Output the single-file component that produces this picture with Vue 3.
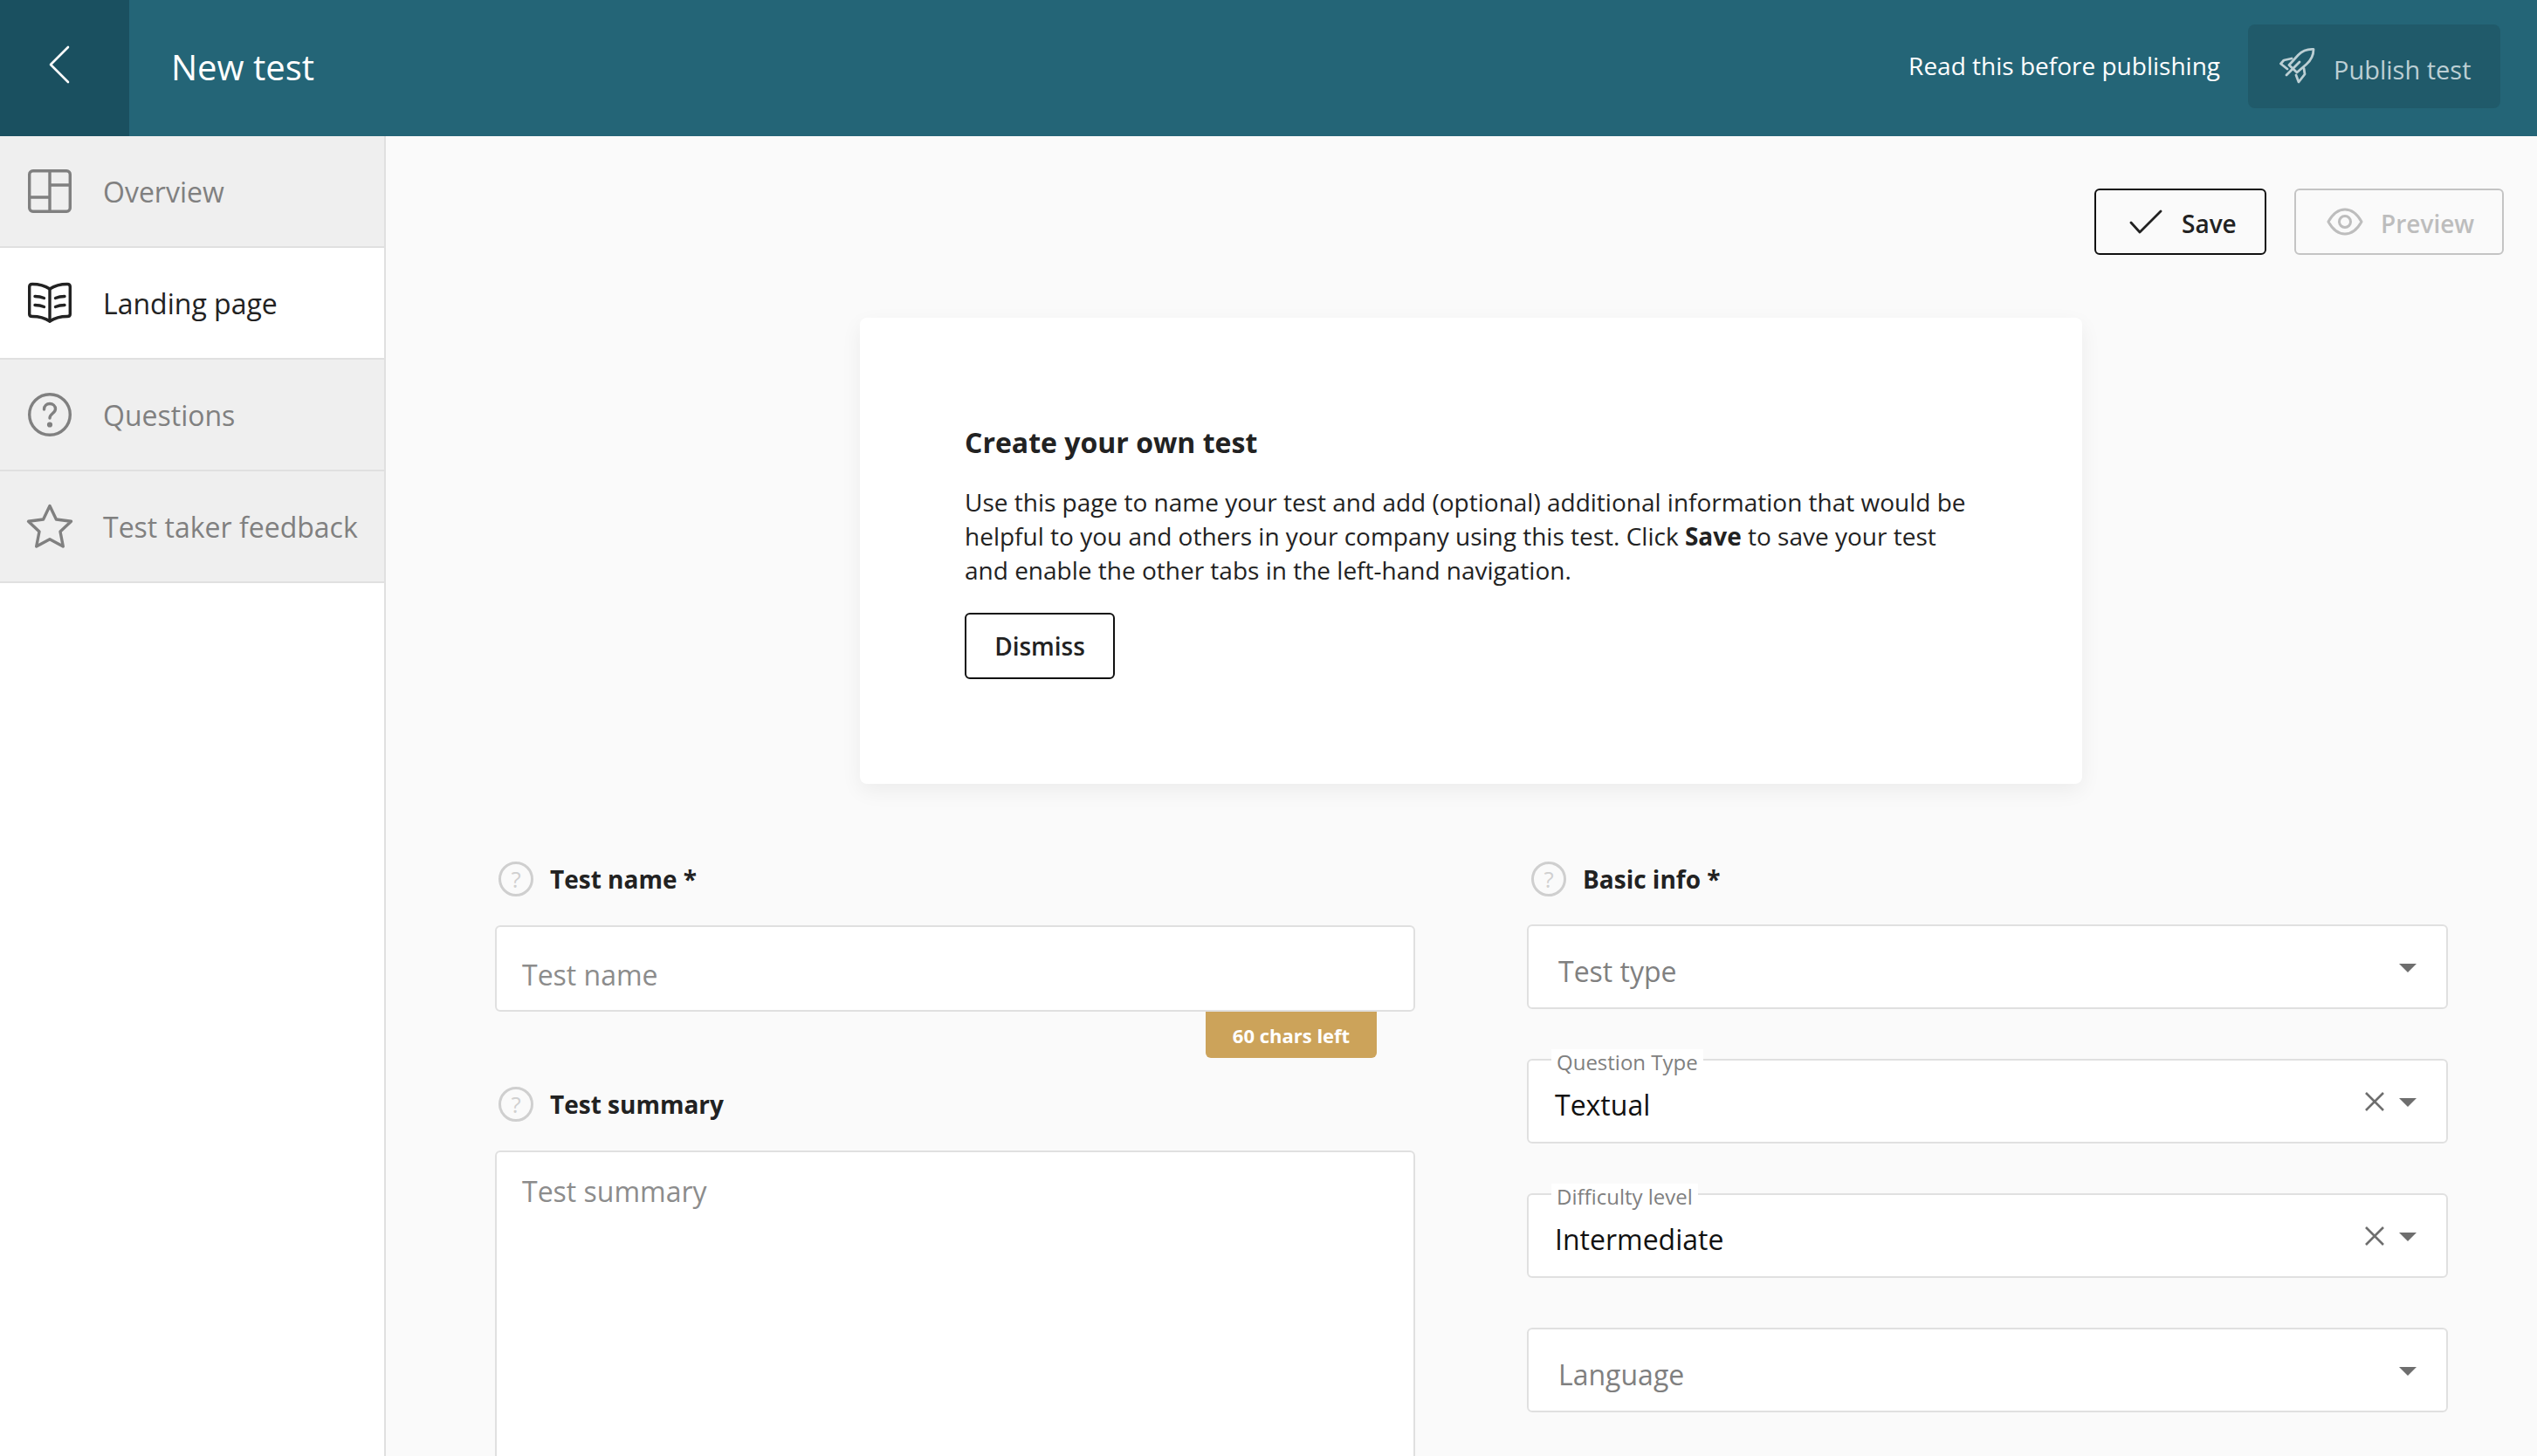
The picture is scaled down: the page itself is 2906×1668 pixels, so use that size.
<script setup>
const navItems = [
  { label: 'Overview', icon: 'grid' },
  { label: 'Landing page', icon: 'book', active: true },
  { label: 'Questions', icon: 'help' },
  { label: 'Test taker feedback', icon: 'star' },
];

const selects = [
  { placeholder: 'Test type' },
  { label: 'Question Type', value: 'Textual' },
  { label: 'Difficulty level', value: 'Intermediate' },
  { placeholder: 'Language' },
];
</script>

<template>
  <div class="page">
    <header class="topbar">
      <button class="back" aria-label="Back">
        <svg width="26" height="44" viewBox="0 0 26 44" fill="none" stroke="#fff" stroke-width="2.6" stroke-linecap="round" stroke-linejoin="round"><path d="M23 2 3 22l20 20" /></svg>
      </button>
      <h1 class="title">New test</h1>
      <a class="read-link">Read this before publishing</a>
      <button class="publish">
        <svg width="42" height="42" viewBox="0 0 42 42" fill="none" stroke="currentColor" stroke-width="2.8" stroke-linejoin="round" stroke-linecap="round">
          <path d="M39 1.500C32 1 26 3.500 21.500 8L11 19.500 20 28 31 18.500C36 14 39 8 39 1.500Z" />
          <path d="M14 12 5 14 1.500 18 9 24" />
          <path d="M28 23.500 29 30 22 39 19 31" />
          <path d="M8 31 23 16" />
        </svg>
        <span>Publish test</span>
      </button>
    </header>

    <div class="body">
      <nav class="sidebar">
        <a v-for="item in navItems" :key="item.label" class="nav-item" :class="{ active: item.active }">
          <svg class="nav-icon" viewBox="0 0 50 50" fill="none" stroke="currentColor" stroke-width="3.4" stroke-linejoin="round" stroke-linecap="round">
            <template v-if="item.icon === 'grid'">
              <rect x="1.700" y="1.700" width="46.600" height="46.600" rx="4" />
              <path d="M25 2v46M25 18h23M2 32h23" />
            </template>
            <template v-else-if="item.icon === 'book'">
              <path d="M25 9C19 5 12 3.500 5 3.500 3 3.500 1.700 4.800 1.700 6.500V38c0 1.500 1.300 2.500 3.300 2.500 7 0 14 1.500 20 5.500 6-4 13-5.500 20-5.500 2 0 3.300-1 3.300-2.500V6.500c0-1.700-1.300-3-3.300-3C38 3.500 31 5 25 9Z" />
              <path d="M25 9v37" />
              <path d="M8 17.500c3 0 7 .5 10.500 2M8 27.500c3 0 7 .5 10.500 2M31.500 19.500c3.500-1.500 7.500-2 10.500-2M31.500 29.500c3.500-1.500 7.500-2 10.500-2" />
            </template>
            <template v-else-if="item.icon === 'help'">
              <circle cx="25" cy="25" r="23.300" />
              <path d="M18.500 19c0-4 3-6.500 6.500-6.500s6.500 2.500 6.500 6c0 5-6.500 5-6.500 10.500" />
              <circle cx="25" cy="36.500" r="1.400" fill="currentColor" />
            </template>
            <template v-else>
              <path d="M25 1.500 32.400 17 49.500 19.300 37 31 40.300 48 25 39.700 9.700 48 13 31 .5 19.300 17.600 17Z" />
            </template>
          </svg>
          <span>{{ item.label }}</span>
        </a>
      </nav>

      <main class="main">
        <div class="actions">
          <button class="btn save">
            <svg width="38" height="28" viewBox="0 0 38 28" fill="none" stroke="#222" stroke-width="2.8" stroke-linecap="round" stroke-linejoin="round"><path d="M2 15l10 11L36 2" /></svg>
            <span>Save</span>
          </button>
          <button class="btn disabled">
            <svg width="42" height="32" viewBox="0 0 42 32" fill="none" stroke="currentColor" stroke-width="3" stroke-linejoin="round"><path d="M2 16C7 7 13 2 21 2s14 5 19 14c-5 9-11 14-19 14S7 25 2 16Z" /><circle cx="21" cy="16" r="6.500" /></svg>
            <span>Preview</span>
          </button>
        </div>

        <section class="intro">
          <h2>Create your own test</h2>
          <p>Use this page to name your test and add (optional) additional information that would be helpful to you and others in your company using this test. Click <b>Save</b> to save your test and enable the other tabs in the left-hand navigation.</p>
          <button class="btn dismiss">Dismiss</button>
        </section>

        <div class="form">
          <div class="col">
            <div class="field-label">
              <span class="help">?</span>
              <label>Test name *</label>
            </div>
            <div class="input name-input">Test name</div>
            <div class="chars-row"><span class="chars">60 chars left</span></div>
            <div class="field-label summary-label">
              <span class="help">?</span>
              <label>Test summary</label>
            </div>
            <div class="input textarea">Test summary</div>
          </div>

          <div class="col info-col">
            <div class="field-label">
              <span class="help">?</span>
              <label>Basic info *</label>
            </div>
            <div class="select-list">
              <div v-for="s in selects" :key="s.label || s.placeholder" class="select">
                <span v-if="s.label" class="float-label">{{ s.label }}</span>
                <span v-if="s.value" class="value">{{ s.value }}</span>
                <span v-else class="placeholder">{{ s.placeholder }}</span>
                <svg v-if="s.value" class="clear" viewBox="0 0 22 22" fill="none" stroke="#6e6e6e" stroke-width="2.6"><path d="M1 1l20 20M21 1 1 21" /></svg>
                <span class="caret"></span>
              </div>
            </div>
          </div>
        </div>
      </main>
    </div>
  </div>
</template>

<style>
html, body { margin: 0; background: #fafafa; }
</style>

<style scoped>
.page {
  width: 2906px;
  height: 1668px;
  overflow: hidden;
  display: flex;
  flex-direction: column;
  font-family: "Open Sans", "Liberation Sans", sans-serif;
  color: #222;
}
button { font: inherit; cursor: pointer; }

.topbar {
  height: 156px;
  flex-shrink: 0;
  display: flex;
  align-items: center;
  background: #246577;
  color: #fff;
}
.back {
  width: 148px;
  height: 100%;
  border: 0;
  background: #1a5060;
  display: flex;
  align-items: flex-start;
  justify-content: center;
  padding: 52px 12px 0 0;
}
.title {
  margin: 0 0 4px 48px;
  font-size: 40px;
  font-weight: 400;
  flex: 1;
}
.read-link { font-size: 28px; margin: 0 32px 6px 0; }
.publish {
  width: 289px;
  height: 96px;
  margin: 0 42px 4px 0;
  padding: 0 0 0 36px;
  border: 0;
  border-radius: 8px;
  background: #205a6a;
  color: #bccfd4;
  font-size: 29px;
  display: flex;
  align-items: center;
  gap: 20px;
}
.publish span { padding-top: 6px; }

.body { flex: 1; display: flex; min-height: 0; }
.sidebar {
  width: 440px;
  flex-shrink: 0;
  background: #fff;
  border-right: 2px solid #e0e0e0;
}
.nav-item {
  height: 126px;
  display: flex;
  align-items: center;
  gap: 36px;
  padding-left: 32px;
  background: #efefef;
  border-bottom: 2px solid #e0e0e0;
  color: #808080;
  font-size: 32px;
}
.nav-item.active { background: #fff; color: #222; }
.nav-icon { width: 50px; height: 50px; flex-shrink: 0; overflow: visible; }

.main { flex: 1; background: #fafafa; padding: 60px 38px 0 124px; min-width: 0; }
.actions { display: flex; justify-content: flex-end; gap: 32px; }
.btn {
  height: 76px;
  box-sizing: border-box;
  border: 2px solid #111;
  border-radius: 6px;
  background: transparent;
  color: #222;
  font-size: 28px;
  font-weight: 600;
  display: flex;
  align-items: center;
  justify-content: flex-start;
  gap: 22px;
  padding: 0 0 0 38px;
  width: 197px;
}
.btn.disabled { width: 240px; padding-left: 35px; gap: 20px; border-color: #c4c4c4; color: #bdbdbd; }
.btn span { padding-top: 4px; }

.intro {
  width: 1400px;
  height: 534px;
  box-sizing: border-box;
  margin: 72px 0 0 419px;
  padding: 120px 120px 0;
  background: #fff;
  border-radius: 8px;
  box-shadow: 0 8px 24px rgba(0, 0, 0, 0.06);
}
.intro h2 { margin: 0 0 26px; font-size: 32px; line-height: 46px; font-weight: 700; }
.intro p { margin: 0; font-size: 28px; line-height: 39px; }
.dismiss { width: 172px; margin-top: 29px; justify-content: center; padding: 0; }

.form {
  display: grid;
  grid-template-columns: 1054px 1055px;
  gap: 128px;
  margin: 89px 0 0 1px;
}
.col { min-width: 0; }
.field-label {
  height: 40px;
  display: flex;
  align-items: center;
  gap: 19px;
  padding-left: 4px;
  font-size: 28px;
  font-weight: 700;
}
.info-col .field-label { padding-left: 5px; }
.help {
  width: 40px;
  height: 40px;
  box-sizing: border-box;
  border: 3px solid #cfcfcf;
  border-radius: 50%;
  color: #d0d0d0;
  font-size: 26px;
  font-weight: 400;
  display: flex;
  align-items: center;
  justify-content: center;
}
.input {
  box-sizing: border-box;
  background: #fff;
  border: 2px solid #e0e0e0;
  border-radius: 6px;
  color: #8c8c8c;
  font-size: 32px;
  padding-left: 29px;
}
.name-input { height: 99px; margin-top: 33px; padding-top: 32px; line-height: 46px; }
.chars-row { display: flex; justify-content: flex-end; padding-right: 44px; }
.chars {
  width: 196px;
  height: 53px;
  background: #cca35a;
  color: #fff;
  font-size: 22px;
  font-weight: 700;
  border-radius: 0 0 6px 6px;
  display: flex;
  align-items: center;
  justify-content: center;
}
.summary-label { margin-top: 33px; }
.textarea { height: 400px; margin-top: 33px; padding-top: 22px; line-height: 46px; }

.select-list { display: flex; flex-direction: column; gap: 57px; margin-top: 32px; }
.select {
  position: relative;
  height: 97px;
  box-sizing: border-box;
  background: #fff;
  border: 2px solid #e0e0e0;
  border-radius: 6px;
}
.placeholder {
  position: absolute;
  left: 34px;
  top: 29px;
  line-height: 46px;
  font-size: 32px;
  color: #808080;
}
.value {
  position: absolute;
  left: 30px;
  top: 28px;
  line-height: 46px;
  font-size: 32px;
  color: #111;
}
.float-label {
  position: absolute;
  left: 26px;
  top: -13px;
  padding: 0 6px;
  background: #fff;
  font-size: 24px;
  line-height: 30px;
  color: #808080;
}
.caret {
  position: absolute;
  right: 34px;
  top: 43px;
  width: 0;
  height: 0;
  border-left: 10px solid transparent;
  border-right: 10px solid transparent;
  border-top: 10px solid #6e6e6e;
}
.clear { position: absolute; right: 71px; top: 36px; width: 22px; height: 22px; }
</style>
